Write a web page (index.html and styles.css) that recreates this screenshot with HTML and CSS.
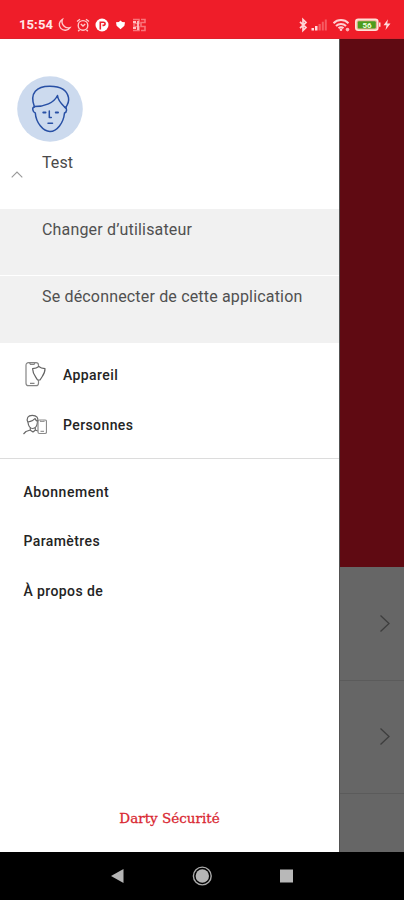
FILE: index.html
```html
<!DOCTYPE html>
<html lang="fr">
<head>
<meta charset="utf-8">
<title>Darty Sécurité</title>
<link rel="stylesheet" href="styles.css">
</head>
<body>
<div class="phone">
  <header class="status">
    <span class="clock">15:54</span>
    <svg class="status-left" width="92" height="16" viewBox="0 0 92 16" fill="none" stroke="#ffc9cb" stroke-width="1.4">
      <path d="M5.500 2.300A5.800 5.800 0 1 0 13 10.600 6.200 6.200 0 0 1 5.500 2.300Z"/>
      <circle cx="26" cy="8.400" r="4.800"/>
      <path d="M20 4.500l3-2.300M32 4.500l-3-2.300M22.500 12.700l-1.300 1.500M29.500 12.700l1.300 1.500M23.800 7l2.200 2 2.200-2"/>
      <circle cx="45" cy="8" r="6.500" fill="#fff" stroke="none"/>
      <path d="M43.300 12.500V5.200h3.200a1.600 1.600 0 0 1 0 3.200h-1" stroke="#ef202c" stroke-width="1.600"/>
      <path d="M63.500 3.500l1.700 1.500 2.800.2-.6 3.600-3.900 3.400-3.900-3.400-.6-3.600 2.800-.2Z" fill="#fff" stroke="none"/>
      <path d="M76 2.500h6v4h-5v3h5v4h-6M84 2.500h4v3h-4v4h4v4h-4" stroke="#f9747a" stroke-width="1.600"/>
      <path d="M76 5h3M76 11h3M81 4v9" stroke="#ffc1c3" stroke-width="1.800"/>
    </svg>
    <svg class="status-right" width="94" height="16" viewBox="0 0 94 16" fill="none">
      <path d="M2 4.800l6 5.800-3 2.900V2.500l3 2.900-6 5.800" stroke="#ffd5d7" stroke-width="1.700"/>
      <path d="M13.500 11v2.500H16V11ZM17 9v4.500h2.500V9Z" fill="#ffd9db"/>
      <path d="M20.500 7h2.300v6.500h-2.300ZM23.800 4.800h2v8.700h-2ZM26.800 2.500h2v11h-2Z" fill="#f65b63"/>
      <path d="M35.500 6.200a10.500 10.500 0 0 1 15 0M38 9a7 7 0 0 1 10 0M40.500 11.300a3.600 3.600 0 0 1 5 0" stroke="#ffd0d2" stroke-width="2"/>
      <circle cx="43" cy="12.800" r="1.300" fill="#ffd0d2"/><circle cx="49.500" cy="12.600" r="1.800" fill="#ffb3b6"/>
      <rect x="57.800" y="2.400" width="22" height="10.800" rx="2.500" stroke="#ffe1d8" stroke-width="1.600" fill="#e9b294"/>
      <rect x="59.800" y="4.200" width="18" height="7.200" rx="1" fill="#4c9c1c"/>
      <path d="M81 5.500h1.500v4.300H81Z" fill="#ffe1d8"/>
      <text class="charge" x="69" y="10.900" text-anchor="middle">56</text>
      <path d="M90 2.300l-4.500 6h3l-1 4.700 5-6.500h-3.300Z" fill="#ffd9db"/>
    </svg>
  </header>

  <main class="screen">
    <nav class="drawer">
      <section class="profile">
        <svg class="avatar" width="66" height="66" viewBox="0 0 66 66">
          <circle cx="33" cy="33" r="32.800" fill="#ccdaee"/>
          <g fill="none" stroke="#2850a5" stroke-width="1.500" stroke-linecap="round" stroke-linejoin="round">
            <path d="M17.500 31C12 17 20 10 33 10.200c11 0 17 3.500 18.500 11.500.8 4-.8 7-3 10.300"/>
            <path d="M17.500 30.500c10 0 19.500-3.500 23-11 .3 5 3.500 8 7.500 12"/>
            <path d="M17 31c-2 .5-1.500 5.300 1.300 6C19 46.500 26 55.500 33 55.500 40 55.500 46.500 47 47.500 37c2.500-.8 2.800-5 .5-6"/>
            <path d="M32.300 35v6.500h2M31 47.300h4.500"/>
            <path d="M26.300 36.500h2.200M38.800 36.500H41" stroke-width="2"/>
          </g>
        </svg>
        <div class="name">Test</div>
        <svg class="collapse" width="12" height="7" viewBox="0 0 12 7" fill="none" stroke="#999" stroke-width="1.100"><path d="M.7 6.300L6 1l5.300 5.300"/></svg>
      </section>

      <ul class="account">
        <li class="switch">Changer d’utilisateur</li>
        <li class="logout">Se déconnecter de cette application</li>
      </ul>

      <ul class="primary">
        <li>
          <svg width="25" height="26" viewBox="0 0 25 26" fill="none" stroke="#626262" stroke-width="1.200" stroke-linejoin="round">
            <path d="M16.500 4V3A2.500 2.500 0 0 0 14 .7H6.500A2.500 2.500 0 0 0 4 3.200v18a2.500 2.500 0 0 0 2.500 2.500H14a2.500 2.500 0 0 0 2.500-2.500v-3M7.500 1l1 1.400h3.500l1-1.400M8 21.300h4.500" stroke="#858585"/>
            <path d="M16.800 4.500c1.800 1.500 3.800 2 6.200 2.200.2 5-2.500 7-5 11.300h-2.400c-2.500-4.300-5-6.300-5-11.300 2.400-.2 4.400-.7 6.200-2.200Z"/>
          </svg>
          <span class="label">Appareil</span>
        </li>
        <li>
          <svg width="25" height="26" viewBox="0 0 25 26" fill="none" stroke="#686868" stroke-width="1.200" stroke-linejoin="round">
            <path d="M6 10.500C4 6 6 3.300 10.300 3.300S17 6 15.500 10c-.5 4.500-2.800 6.500-4.800 6.500S6.500 14.500 6 10.500ZM6 10c3.500-.5 5.500-1.500 7-3.500.5 1.500 1.500 2.500 2.700 3"/>
            <path d="M8.300 15.500V18L4 19.500 1.500 22M13.300 15.500V18l2.500 1M8 18l3 2 2.500-2"/>
            <rect x="16" y="8" width="8.500" height="13.500" rx="1.500" stroke="#8b8b8b"/><path d="M18.500 8.500v1h3.500v-1M18.500 19.300H22" stroke="#999"/>
          </svg>
          <span class="label">Personnes</span>
        </li>
      </ul>

      <ul class="secondary label">
        <li>Abonnement</li>
        <li>Paramètres</li>
        <li>À propos de</li>
      </ul>
      <div class="brand">Darty Sécurité</div>
    </nav>

    <aside class="backdrop">
      <div class="hero"></div>
      <div class="row"><svg width="12" height="19" viewBox="0 0 12 19"><path d="M1.500 1.500l8.500 8-8.500 8"/></svg></div>
      <div class="row"><svg width="12" height="19" viewBox="0 0 12 19"><path d="M1.500 1.500l8.500 8-8.500 8"/></svg></div>
      <div class="rest"></div>
    </aside>
  </main>

  <footer class="navbar">
    <svg width="404" height="48" viewBox="0 0 404 48">
      <path d="M111 24l12.500-7v14Z" fill="#b5b5b5"/>
      <circle cx="202.300" cy="24" r="8.900" fill="none" stroke="#aaa" stroke-width="1.400"/>
      <circle cx="202.300" cy="24" r="6.700" fill="#b5b5b5"/>
      <rect x="280" y="17.500" width="13" height="13" fill="#b8b8b8"/>
    </svg>
  </footer>
</div>
</body>
</html>
```
FILE: styles.css
```css
* { box-sizing: border-box; }
body { margin: 0; font-family: Roboto, "Liberation Sans", sans-serif; }
ul { list-style: none; margin: 0; padding: 0; }
svg { display: block; flex: none; }

.phone { width: 404px; height: 900px; display: flex; flex-direction: column; overflow: hidden; background: #000; }

.status { height: 39px; flex: none; display: flex; align-items: flex-start; padding: 17px 0 0 19px; background: #ef1d29; border-bottom: 1px solid #df222c; }
.clock { width: 38px; color: #ffe7e8; font-size: 13px; font-weight: 700; line-height: 16px; letter-spacing: 0.1px; }
.status-right { margin-left: 149px; }
.charge { font: 700 8px Roboto, sans-serif; fill: #efffdc; }

.screen { height: 813px; flex: none; display: flex; }
.drawer { width: 339px; flex: none; display: flex; flex-direction: column; background: #fff; }

.profile { height: 170px; flex: none; padding: 37px 0 0 17px; }
.name { margin: 11px 0 0 25px; font-size: 16px; line-height: 20px; letter-spacing: 0.1px; color: #4a4a4a; }
.collapse { margin: -2px 0 0 -6px; }

.account { flex: none; color: #505050; font-size: 16px; line-height: 20px; letter-spacing: 0.17px; }
.account li { height: 66px; padding: 11px 0 0 42px; background: #f1f1f1; white-space: nowrap; }
.account .logout { margin-top: 1px; height: 67px; }

.primary { height: 116px; flex: none; padding-top: 7.500px; border-bottom: 1px solid #dcdcdc; }
.primary li { height: 49.500px; display: flex; align-items: center; padding-left: 22px; gap: 16px; }
.primary, .secondary { font-size: 14px; font-weight: 500; line-height: 20px; color: #242424; }
.label { letter-spacing: 0.4px; }

.secondary { padding: 8px 0 0 23.500px; }
.secondary li { height: 49.500px; display: flex; align-items: center; }
.secondary li:first-child { letter-spacing: 0.55px; }

.brand { margin-top: auto; height: 44px; text-align: center; color: #d92832; font: 13.500px/20px "DejaVu Serif", "Liberation Serif", serif; -webkit-text-stroke: 0.3px #d92832; }

.backdrop { flex: 1; display: flex; flex-direction: column; background: #666; border-left: 1px solid #525252; }
.hero { height: 528px; flex: none; background: #5f0a12; }
.row { height: 113.500px; flex: none; display: flex; align-items: center; justify-content: flex-end; padding-right: 13px; border-bottom: 1px solid #5b5b5b; }
.row path { fill: none; stroke: #3e3e3e; stroke-width: 1.300; }
.rest { flex: 1; }

.navbar { height: 48px; flex: none; background: #000; }
```
